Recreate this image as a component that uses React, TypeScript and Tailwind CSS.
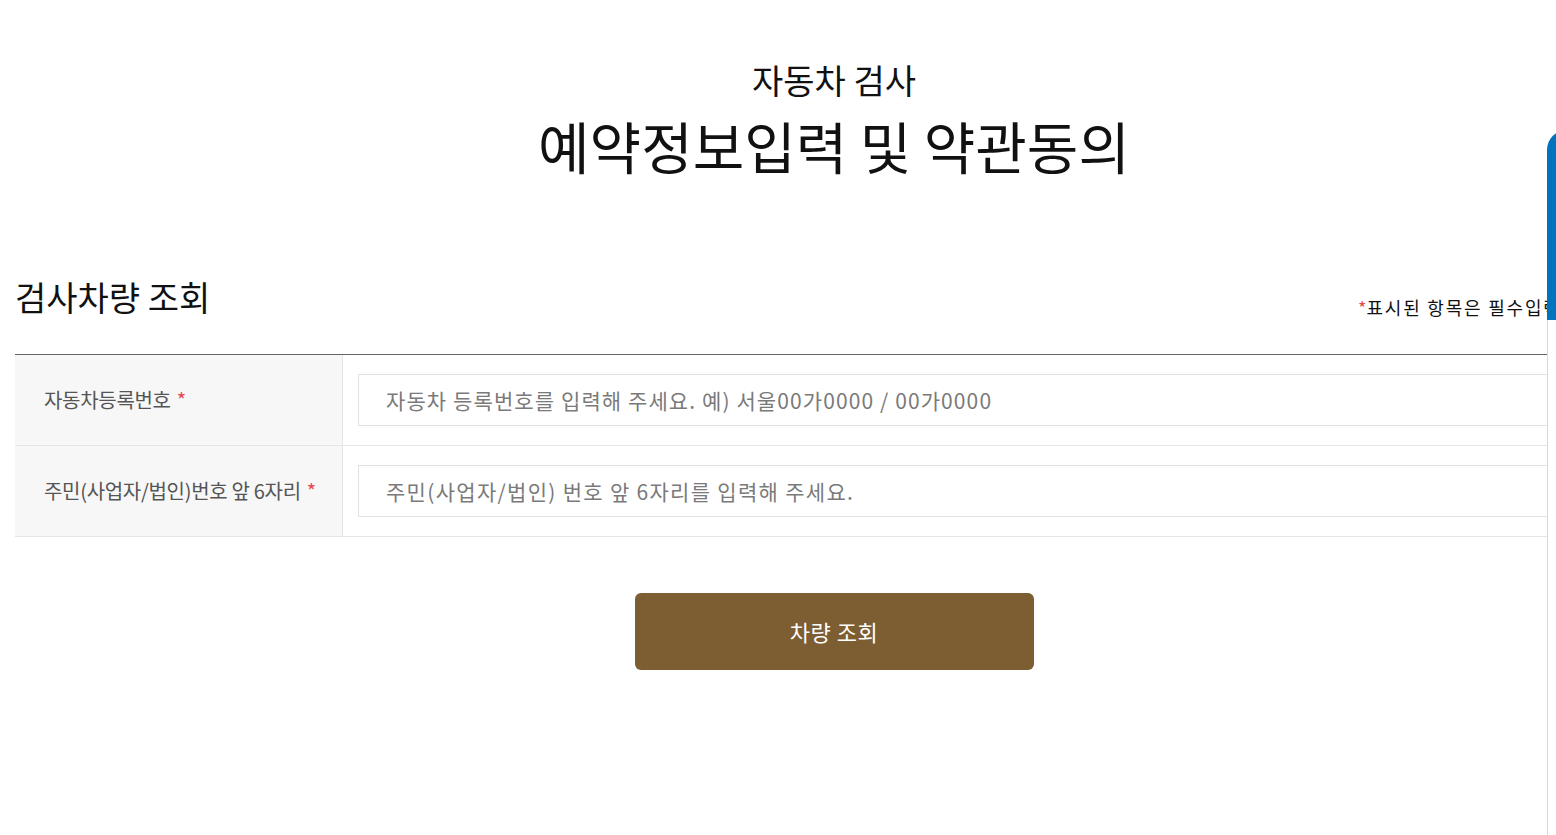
import React from "react";

const font = { fontFamily: '"Noto Sans CJK KR", "Noto Sans", sans-serif' };

export default function App() {
  return (
    <div className="relative w-screen h-[835px] overflow-hidden bg-white" style={font}>
      <div className="ml-[15px] w-[1638px]">
        <div className="pt-[58px] text-center">
          <div className="text-[34px] leading-[44px] text-[#111]">자동차 검사</div>
          <div className="mt-[8px] text-[56px] leading-[70px] text-[#111]">예약정보입력 및 약관동의</div>
        </div>

        <div className="mt-[94px] grid grid-cols-[1343px_1fr] items-end">
          <div className="text-[34px] leading-[46px] text-[#111]">검사차량 조회</div>
          <div className="text-[18px] leading-[26px] text-[#111] whitespace-nowrap tracking-[1.8px]">
            <span className="text-[#e5484d] tracking-normal">*</span>표시된 항목은 필수입력 사항입니다.
          </div>
        </div>

        <div className="mt-[34px] border-t border-[#666]">
          <div className="flex h-[91px] border-b border-[#e5e5e5]">
            <div className="w-[328px] shrink-0 bg-[#f7f7f7] border-r border-[#e5e5e5] flex items-center pl-[29px] text-[20px] text-[#555] tracking-[-0.3px]">
              자동차등록번호<span className="ml-[6px] text-[#e5484d]">*</span>
            </div>
            <div className="flex-1 flex items-center pl-[15px]">
              <input
                className="w-full h-[52px] border border-[#e2e2e2] px-[27px] text-[21px] text-[#333] placeholder-[#7a7a7a] outline-none tracking-[1.1px]"
                style={font}
                placeholder="자동차 등록번호를 입력해 주세요. 예) 서울00가0000 / 00가0000"
              />
            </div>
          </div>
          <div className="flex h-[91px] border-b border-[#e5e5e5]">
            <div className="w-[328px] shrink-0 bg-[#f7f7f7] border-r border-[#e5e5e5] flex items-center pl-[29px] text-[20px] text-[#555] tracking-[-0.3px]">
              주민(사업자/법인)번호 앞 6자리<span className="ml-[6px] text-[#e5484d]">*</span>
            </div>
            <div className="flex-1 flex items-center pl-[15px]">
              <input
                className="w-full h-[52px] border border-[#e2e2e2] px-[27px] text-[21px] text-[#333] placeholder-[#7a7a7a] outline-none tracking-[1.3px]"
                style={font}
                placeholder="주민(사업자/법인) 번호 앞 6자리를 입력해 주세요."
              />
            </div>
          </div>
        </div>

        <div className="mt-[56px] flex justify-center">
          <button className="w-[399px] h-[77px] rounded-[6px] bg-[#7d5e32] text-white text-[22px] tracking-[0.5px]" style={font}>
            차량 조회
          </button>
        </div>
      </div>

      <div className="absolute left-[1547px] top-[130px] bottom-0 w-[20px] flex flex-col">
        <div className="h-[190px] bg-[#0073be] rounded-tl-[30px]"></div>
        <div className="flex-1 bg-white border-l border-[#d8d8d8]"></div>
      </div>
    </div>
  );
}
